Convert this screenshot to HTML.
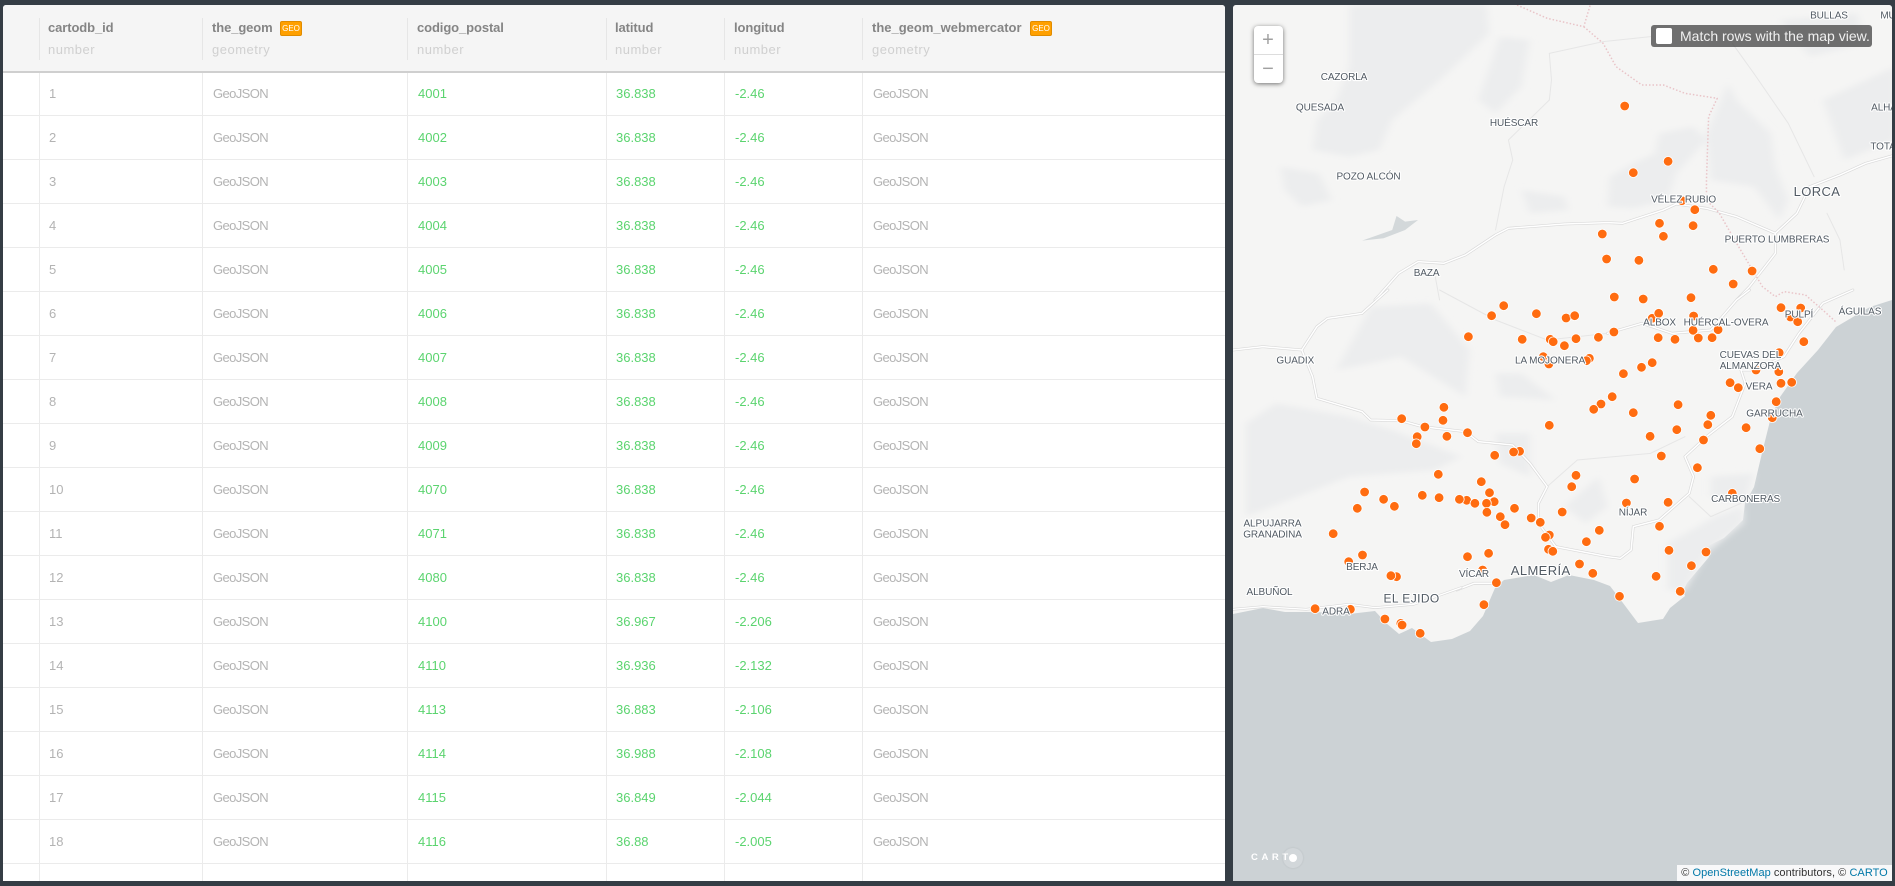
<!DOCTYPE html>
<html><head><meta charset="utf-8"><title>Table and map</title>
<style>
html,body{margin:0;padding:0;width:1895px;height:886px;overflow:hidden;background:#353d45;font-family:"Liberation Sans",sans-serif}
#t{position:absolute;left:3px;top:5px;width:1222px;height:876px;background:#fff;overflow:hidden;border-radius:3px 3px 0 0}
#h{position:absolute;left:0;top:0;width:1222px;height:66px;background:#f5f5f5;border-bottom:2px solid #cfcfcf}
.s{position:absolute;top:13px;height:42px;width:1px;background:#e6e6e6}
.v{position:absolute;top:68px;bottom:0;width:1px;background:#ebebeb}
.n{position:absolute;top:15px;font-size:13px;font-weight:bold;color:#858585;line-height:15px;white-space:nowrap;letter-spacing:-.1px}
.y{position:absolute;top:37px;font-size:13px;color:#d0d0d0;line-height:15px;white-space:nowrap;letter-spacing:.5px}
.g{position:absolute;top:16px;height:13px;width:20px;background:#ffa000;border:1px solid #e08c00;border-radius:2px;color:#fff;font-size:8px;line-height:14px;text-align:center;box-sizing:content-box}
.r{position:absolute;left:0;width:1222px;height:43px;border-bottom:1px solid #ebebeb;font-size:13px;line-height:44px;color:#b3b3b3}
.r span{position:absolute;top:0;white-space:nowrap}
.c1{left:46px}.c2{left:210px;letter-spacing:-.6px}.c3{left:415px;color:#5bd46f}.c4{left:613px;color:#5bd46f}.c5{left:732px;color:#5bd46f}.c6{left:870px;letter-spacing:-.6px}
#m{position:absolute;left:1233px;top:5px;width:659px;height:876px;overflow:hidden;background:#ccd2d5;border-radius:3px 3px 0 0}
#m svg{position:absolute;left:-1233px;top:-5px}
.l text{font-family:"Liberation Sans",sans-serif;font-size:10px;letter-spacing:-.1px;fill:#515a63;text-anchor:middle;stroke:#fff;stroke-width:2.2px;paint-order:stroke;stroke-linejoin:round}
.l text.b{font-size:13px;letter-spacing:.4px}
.d circle{fill:#ff6c10;stroke:#fff;stroke-width:.8;r:4.8px}
.rd{fill:none;stroke-linejoin:round;stroke-linecap:round}
.rd path,.rd polyline{vector-effect:non-scaling-stroke}
.hl path{fill:#ecedee}
#z{position:absolute;left:20.5px;top:20.5px;width:29px;height:57px;background:#fff;border-radius:4px;box-shadow:0 1px 5px rgba(0,0,0,.55);color:#a0a0a0;font-size:20px;text-align:center}
#z div{height:28px;line-height:29px}
#z div:first-child{border-bottom:1px solid #ddd}
#k{position:absolute;left:418px;top:20px;width:221px;height:22px;background:rgba(60,60,60,.72);border-radius:3px;color:#f0f0f0;font-size:14px;line-height:22px;white-space:nowrap}
#k i{position:absolute;left:5px;top:3px;width:16px;height:16px;background:#fff;border-radius:2px}
#k span{position:absolute;left:29px;top:0}
#a{position:absolute;right:0;bottom:0;height:16px;width:215px;background:rgba(255,255,255,.85);font-size:11px;line-height:16px;color:#333;text-align:center;white-space:nowrap;letter-spacing:.05px}
#a b{font-weight:normal;color:#0078a8}
#c{position:absolute;left:18px;top:843px;width:48px;height:20px;color:#fff;font-size:9.5px;font-weight:bold;letter-spacing:3.6px;line-height:20px;white-space:nowrap}
#o{position:absolute;left:50px;top:843px;width:20px;height:20px;border-radius:50%;background:rgba(255,255,255,.12);box-shadow:0 0 2px rgba(0,0,0,.1)}
#o:after{content:"";position:absolute;left:6px;top:6px;width:8px;height:8px;border-radius:50%;background:#fff}
</style></head><body>
<div id="t">
<div class="v" style="left:36px"></div><div class="v" style="left:199px"></div><div class="v" style="left:404px"></div><div class="v" style="left:603px"></div><div class="v" style="left:721px"></div><div class="v" style="left:859px"></div>
<div class="r" style="top:67px"><span class="c1">1</span><span class="c2">GeoJSON</span><span class="c3">4001</span><span class="c4">36.838</span><span class="c5">-2.46</span><span class="c6">GeoJSON</span></div>
<div class="r" style="top:111px"><span class="c1">2</span><span class="c2">GeoJSON</span><span class="c3">4002</span><span class="c4">36.838</span><span class="c5">-2.46</span><span class="c6">GeoJSON</span></div>
<div class="r" style="top:155px"><span class="c1">3</span><span class="c2">GeoJSON</span><span class="c3">4003</span><span class="c4">36.838</span><span class="c5">-2.46</span><span class="c6">GeoJSON</span></div>
<div class="r" style="top:199px"><span class="c1">4</span><span class="c2">GeoJSON</span><span class="c3">4004</span><span class="c4">36.838</span><span class="c5">-2.46</span><span class="c6">GeoJSON</span></div>
<div class="r" style="top:243px"><span class="c1">5</span><span class="c2">GeoJSON</span><span class="c3">4005</span><span class="c4">36.838</span><span class="c5">-2.46</span><span class="c6">GeoJSON</span></div>
<div class="r" style="top:287px"><span class="c1">6</span><span class="c2">GeoJSON</span><span class="c3">4006</span><span class="c4">36.838</span><span class="c5">-2.46</span><span class="c6">GeoJSON</span></div>
<div class="r" style="top:331px"><span class="c1">7</span><span class="c2">GeoJSON</span><span class="c3">4007</span><span class="c4">36.838</span><span class="c5">-2.46</span><span class="c6">GeoJSON</span></div>
<div class="r" style="top:375px"><span class="c1">8</span><span class="c2">GeoJSON</span><span class="c3">4008</span><span class="c4">36.838</span><span class="c5">-2.46</span><span class="c6">GeoJSON</span></div>
<div class="r" style="top:419px"><span class="c1">9</span><span class="c2">GeoJSON</span><span class="c3">4009</span><span class="c4">36.838</span><span class="c5">-2.46</span><span class="c6">GeoJSON</span></div>
<div class="r" style="top:463px"><span class="c1">10</span><span class="c2">GeoJSON</span><span class="c3">4070</span><span class="c4">36.838</span><span class="c5">-2.46</span><span class="c6">GeoJSON</span></div>
<div class="r" style="top:507px"><span class="c1">11</span><span class="c2">GeoJSON</span><span class="c3">4071</span><span class="c4">36.838</span><span class="c5">-2.46</span><span class="c6">GeoJSON</span></div>
<div class="r" style="top:551px"><span class="c1">12</span><span class="c2">GeoJSON</span><span class="c3">4080</span><span class="c4">36.838</span><span class="c5">-2.46</span><span class="c6">GeoJSON</span></div>
<div class="r" style="top:595px"><span class="c1">13</span><span class="c2">GeoJSON</span><span class="c3">4100</span><span class="c4">36.967</span><span class="c5">-2.206</span><span class="c6">GeoJSON</span></div>
<div class="r" style="top:639px"><span class="c1">14</span><span class="c2">GeoJSON</span><span class="c3">4110</span><span class="c4">36.936</span><span class="c5">-2.132</span><span class="c6">GeoJSON</span></div>
<div class="r" style="top:683px"><span class="c1">15</span><span class="c2">GeoJSON</span><span class="c3">4113</span><span class="c4">36.883</span><span class="c5">-2.106</span><span class="c6">GeoJSON</span></div>
<div class="r" style="top:727px"><span class="c1">16</span><span class="c2">GeoJSON</span><span class="c3">4114</span><span class="c4">36.988</span><span class="c5">-2.108</span><span class="c6">GeoJSON</span></div>
<div class="r" style="top:771px"><span class="c1">17</span><span class="c2">GeoJSON</span><span class="c3">4115</span><span class="c4">36.849</span><span class="c5">-2.044</span><span class="c6">GeoJSON</span></div>
<div class="r" style="top:815px"><span class="c1">18</span><span class="c2">GeoJSON</span><span class="c3">4116</span><span class="c4">36.88</span><span class="c5">-2.005</span><span class="c6">GeoJSON</span></div>
<div id="h">
<div class="s" style="left:36px"></div><div class="s" style="left:199px"></div><div class="s" style="left:404px"></div><div class="s" style="left:603px"></div><div class="s" style="left:721px"></div><div class="s" style="left:859px"></div>
<div class="n" style="left:45px">cartodb_id</div><div class="y" style="left:45px">number</div>
<div class="n" style="left:209px">the_geom</div><div class="g" style="left:277px">GEO</div><div class="y" style="left:209px">geometry</div>
<div class="n" style="left:414px">codigo_postal</div><div class="y" style="left:414px">number</div>
<div class="n" style="left:612px">latitud</div><div class="y" style="left:612px">number</div>
<div class="n" style="left:731px">longitud</div><div class="y" style="left:731px">number</div>
<div class="n" style="left:869px;letter-spacing:0">the_geom_webmercator</div><div class="g" style="left:1027px">GEO</div><div class="y" style="left:869px">geometry</div>
</div>
</div>
<div id="m">
<svg width="1895" height="886" viewBox="0 0 1895 886">
<defs><filter id="bl" x="-20%" y="-20%" width="140%" height="140%"><feGaussianBlur stdDeviation="9"/></filter></defs>
<path fill="#f5f5f4" d="M1233 0H1895V299L1870 307L1836 327L1818 350L1797 373L1780 397L1771 417L1762 453L1754 487L1745 503L1743 520L1724 538L1706 547L1709 557L1687 583L1683 591L1685 596L1670 608L1663 619L1638 623L1620 599L1610 586L1594 580L1569 575L1551 582L1534 575L1504 580L1495 588L1483 616L1470 631L1452 639L1431 642L1412 628L1399 634L1386 623L1375 611L1349 614L1315 612L1285 612L1263 608L1233 614Z"/>
<g class="hl" filter="url(#bl)" transform="translate(1220,0) scale(.4305,.3333)">
<path d="M300 15L620 15L625 100L520 230L400 360L370 450L300 470L215 450L225 360L270 300L300 200Z"/>
<path d="M900 620L905 530L960 490L1010 460L1020 400L1100 380L1130 420L1060 520L1040 600L960 625Z"/>
<path d="M1130 400L1180 250L1200 300L1280 400L1290 500L1320 600L1300 660L1240 560L1140 540Z"/>
<path d="M1400 300L1568 200L1568 420L1450 480Z"/>
<path d="M140 500L230 520L260 600L190 620L150 570Z"/>
<path d="M700 570L800 590L810 630L720 640Z"/>
<path d="M1300 60L1480 40L1500 130L1370 170Z"/>
<path d="M650 110L720 120L700 260L640 340L600 300Z"/>
</g>
<g class="hl" filter="url(#bl)" transform="translate(1220,290) scale(.4305,.3333)">
<path d="M270 240L350 50L490 40L580 180L570 320L420 200L350 220Z"/>
<path d="M60 400L130 340L300 380L400 420L560 500L500 540L300 560L180 620L60 680Z"/>
<path d="M800 650L880 560L900 650L850 700Z"/>
<path d="M1040 900L1040 760L1150 680L1215 650L1215 700L1130 790L1080 900Z"/>
<path d="M640 250L700 250L780 330L650 320Z"/>
<path d="M1140 560L1240 550L1220 640L1140 620Z"/>
<path d="M640 430L720 430L720 560L650 520Z"/>
</g>
<path fill="#d3d8da" transform="translate(1220,0) scale(.4305,.3333)" d="M330 722L400 690L410 648L430 665L460 660L430 690L380 715Z"/>
<g class="rd" stroke="#e6e6e6" transform="translate(1220,0) scale(.4305,.3333)" stroke-width="1">
<polyline points="765,300 770,240 765,160 890,125 1000,110"/>
<polyline points="640,690 660,560 680,480 670,420 765,300"/>
<polyline points="1190,130 1240,220 1320,370 1380,530"/>
<polyline points="1410,640 1440,720 1450,810"/>
<polyline points="510,900 500,830"/>
</g>
<g class="rd" transform="translate(1220,0) scale(.4305,.3333)">
<g stroke="#d9d9d9" stroke-width="2.8"><polyline points="360,900 415,820 460,785 520,790 570,765 640,705 670,685 800,672 900,668 935,670 1030,630 1060,612 1130,625 1200,650 1290,700 1290,760 1230,860 1200,900"/><polyline points="1290,700 1340,640 1370,560 1440,525 1500,490 1568,465"/></g>
<g stroke="#fff" stroke-width="1.5"><polyline points="360,900 415,820 460,785 520,790 570,765 640,705 670,685 800,672 900,668 935,670 1030,630 1060,612 1130,625 1200,650 1290,700 1290,760 1230,860 1200,900"/><polyline points="1290,700 1340,640 1370,560 1440,525 1500,490 1568,465"/></g>
</g>
<g class="rd" transform="translate(1220,290) scale(.4305,.3333)">
<g stroke="#e6e6e6" stroke-width="1"><polyline points="510,0 640,90 760,150 900,130"/><polyline points="760,590 830,510 1000,490 1080,440"/><polyline points="1090,620 1140,680 1210,640"/></g>
<g stroke="#d9d9d9" stroke-width="2.8"><polyline points="30,180 100,170 190,180 225,110 250,85 330,70 390,0"/><polyline points="190,180 215,260 225,325 330,365 350,390 420,392 470,410 570,425 600,455 680,465 720,520 760,590 740,640 740,700 780,770 900,800 930,805 955,780 960,710 1020,690 1090,610 1100,560 1080,500 1130,440 1190,380 1220,280 1210,240 1240,240 1310,200 1345,130 1400,40 1470,0"/><polyline points="900,130 980,100 1050,130 1140,120 1200,30 1230,0"/><polyline points="640,880 590,880 550,900"/></g>
<g stroke="#fff" stroke-width="1.5"><polyline points="30,180 100,170 190,180 225,110 250,85 330,70 390,0"/><polyline points="190,180 215,260 225,325 330,365 350,390 420,392 470,410 570,425 600,455 680,465 720,520 760,590 740,640 740,700 780,770 900,800 930,805 955,780 960,710 1020,690 1090,610 1100,560 1080,500 1130,440 1190,380 1220,280 1210,240 1240,240 1310,200 1345,130 1400,40 1470,0"/><polyline points="900,130 980,100 1050,130 1140,120 1200,30 1230,0"/><polyline points="640,880 590,880 550,900"/></g>
</g>
<g class="rd" transform="translate(1220,586) scale(.4305,.3333)">
<g stroke="#d9d9d9" stroke-width="2.6"><polyline points="30,70 100,62 200,70 300,55 360,65 450,55 560,5"/></g>
<g stroke="#fff" stroke-width="1.3"><polyline points="30,70 100,62 200,70 300,55 360,65 450,55 560,5"/></g>
</g>
<g class="rd" stroke="#e9c4c8" stroke-width="1.5" stroke-dasharray="1.5 2" style="stroke-linecap:butt" transform="translate(1220,0) scale(.4305,.3333)">
<polyline points="690,15 760,55 845,80 860,15"/>
<polyline points="845,80 890,130 920,200 980,255 1030,255 1080,280 1155,295 1135,350 1130,540 1130,600 1160,640 1200,730 1260,860 1290,890 1310,875 1360,885 1400,930 1430,965"/>
</g>
<g class="d">
<circle cx="1624.7" cy="106"/><circle cx="1668.1" cy="161.3"/><circle cx="1633.3" cy="172.7"/><circle cx="1681.9" cy="200.7"/><circle cx="1694.8" cy="209.7"/><circle cx="1659.5" cy="223.3"/><circle cx="1693.1" cy="225.7"/><circle cx="1602.3" cy="234"/><circle cx="1663.4" cy="236.3"/><circle cx="1606.6" cy="259"/><circle cx="1638.9" cy="260.3"/><circle cx="1713.3" cy="269.3"/><circle cx="1752.1" cy="271"/><circle cx="1733.2" cy="284"/>
<circle cx="1614.3" cy="297"/><circle cx="1643.2" cy="299"/><circle cx="1691" cy="297.7"/><circle cx="1503.7" cy="305.7"/><circle cx="1491.6" cy="315.7"/><circle cx="1536.4" cy="313.7"/><circle cx="1566.1" cy="318"/><circle cx="1574.7" cy="315.7"/><circle cx="1652.2" cy="318.3"/><circle cx="1658.7" cy="313.3"/><circle cx="1693.6" cy="316"/><circle cx="1781" cy="307.7"/><circle cx="1800.7" cy="308"/><circle cx="1790.4" cy="317"/><circle cx="1797.7" cy="321.7"/>
<circle cx="1468.4" cy="336.7"/><circle cx="1522.2" cy="339.3"/><circle cx="1550.2" cy="339.3"/><circle cx="1553.2" cy="341.7"/><circle cx="1564.4" cy="345.7"/><circle cx="1576" cy="338.7"/><circle cx="1598.4" cy="337.3"/><circle cx="1613.9" cy="332"/><circle cx="1658.2" cy="337.7"/><circle cx="1675" cy="339.3"/><circle cx="1693.1" cy="330.3"/><circle cx="1698.3" cy="338"/><circle cx="1712.1" cy="337.7"/><circle cx="1718.1" cy="329.7"/><circle cx="1803.8" cy="341.7"/><circle cx="1779.2" cy="352.7"/><circle cx="1543.3" cy="356.7"/><circle cx="1548.9" cy="364"/><circle cx="1589.4" cy="358.3"/><circle cx="1586.4" cy="360.7"/><circle cx="1623.4" cy="373.7"/><circle cx="1641.5" cy="367.3"/><circle cx="1652.2" cy="362.7"/><circle cx="1778.8" cy="371.7"/><circle cx="1756" cy="370"/><circle cx="1730.1" cy="382.7"/><circle cx="1738.3" cy="387.7"/><circle cx="1781" cy="383.3"/><circle cx="1791.7" cy="382.3"/><circle cx="1776.2" cy="401.7"/><circle cx="1612.2" cy="396.7"/><circle cx="1601" cy="404"/><circle cx="1593.7" cy="409.3"/><circle cx="1633.3" cy="412.7"/><circle cx="1678.1" cy="404.7"/><circle cx="1710.8" cy="415.3"/><circle cx="1707.8" cy="424.7"/><circle cx="1676.8" cy="429.7"/><circle cx="1650.1" cy="436.3"/><circle cx="1746.1" cy="427.7"/><circle cx="1703.5" cy="440"/><circle cx="1772.3" cy="417.7"/><circle cx="1759.8" cy="448.7"/><circle cx="1661.3" cy="456"/><circle cx="1697.4" cy="467.7"/><circle cx="1549.3" cy="425.3"/><circle cx="1443.9" cy="407.3"/><circle cx="1443" cy="420.3"/><circle cx="1401.7" cy="418.7"/><circle cx="1424.9" cy="427"/><circle cx="1417.2" cy="436.7"/><circle cx="1416.3" cy="443.7"/><circle cx="1446.9" cy="436.3"/><circle cx="1467.5" cy="432.7"/><circle cx="1494.7" cy="455.3"/><circle cx="1519.6" cy="451.3"/><circle cx="1513.6" cy="452"/><circle cx="1438.3" cy="474.3"/><circle cx="1481.3" cy="481.7"/><circle cx="1489.5" cy="492.7"/><circle cx="1576" cy="475.3"/><circle cx="1571.7" cy="486.7"/><circle cx="1634.6" cy="479"/><circle cx="1364.6" cy="492"/><circle cx="1383.6" cy="499.3"/><circle cx="1394.4" cy="506.3"/><circle cx="1357.3" cy="508.3"/><circle cx="1422.3" cy="495.3"/><circle cx="1439.1" cy="497.7"/><circle cx="1466.7" cy="500.3"/><circle cx="1459.4" cy="499.3"/><circle cx="1474.9" cy="503.3"/><circle cx="1494.2" cy="501.7"/><circle cx="1486.5" cy="503.3"/><circle cx="1486.9" cy="512.3"/><circle cx="1514.5" cy="508.3"/><circle cx="1500.3" cy="516.7"/><circle cx="1505" cy="524.7"/><circle cx="1531.2" cy="518"/><circle cx="1540.3" cy="522.3"/><circle cx="1562.2" cy="512"/><circle cx="1626.4" cy="503"/><circle cx="1668.1" cy="502.3"/><circle cx="1732.3" cy="493.3"/><circle cx="1599.3" cy="530.3"/><circle cx="1659.5" cy="526.3"/><circle cx="1549.3" cy="535"/><circle cx="1545.5" cy="537.3"/><circle cx="1586.4" cy="541.7"/><circle cx="1548.5" cy="549.3"/><circle cx="1552.8" cy="551.3"/><circle cx="1669" cy="550.3"/><circle cx="1706" cy="552"/><circle cx="1691.4" cy="565.7"/><circle cx="1333.2" cy="533.7"/><circle cx="1362.5" cy="555"/><circle cx="1348.7" cy="561.7"/><circle cx="1396.5" cy="576.7"/><circle cx="1390.9" cy="575.7"/><circle cx="1467.5" cy="556.7"/><circle cx="1488.6" cy="553.3"/><circle cx="1482.6" cy="570"/><circle cx="1496.4" cy="582.7"/><circle cx="1579.5" cy="564"/><circle cx="1592.8" cy="573.3"/><circle cx="1656.1" cy="576.3"/><circle cx="1680.2" cy="591.3"/><circle cx="1483.9" cy="604.7"/><circle cx="1315.1" cy="608.7"/><circle cx="1350.4" cy="609.3"/><circle cx="1384.9" cy="619"/><circle cx="1400.8" cy="623.3"/><circle cx="1402.1" cy="625"/><circle cx="1420.2" cy="633.3"/><circle cx="1619.5" cy="596.3"/>
</g>
<g class="l">
<text x="1829" y="18.5">BULLAS</text><text x="1888" y="18.5">MU</text><text x="1344" y="80">CAZORLA</text><text x="1320" y="110.5">QUESADA</text><text x="1514" y="126">HUÉSCAR</text><text x="1884" y="110.5">ALHA</text><text x="1368.5" y="179.5">POZO ALCÓN</text><text x="1883" y="149.5">TOTA</text><text x="1683.6" y="202.5">VÉLEZ RUBIO</text><text class="b" x="1817" y="196">LORCA</text><text x="1777" y="242.5">PUERTO LUMBRERAS</text><text x="1426.6" y="276">BAZA</text>
<text x="1799" y="317.5">PULPÍ</text><text x="1860" y="314.5">ÁGUILAS</text><text x="1659.6" y="325.5">ALBOX</text><text x="1726" y="325.5">HUÉRCAL-OVERA</text><text x="1750.4" y="358">CUEVAS DEL</text><text x="1750.4" y="369">ALMANZORA</text><text x="1295.3" y="363.5">GUADIX</text><text x="1550" y="363.5">LA MOJONERA</text><text x="1759" y="389.5">VERA</text><text x="1774.5" y="416.5">GARRUCHA</text><text x="1745.6" y="502">CARBONERAS</text><text x="1633" y="515.5">NÍJAR</text><text x="1272.5" y="526.5">ALPUJARRA</text><text x="1272.5" y="537.5">GRANADINA</text><text x="1362" y="570">BERJA</text><text x="1474" y="577">VÍCAR</text><text class="b" x="1540.7" y="575">ALMERÍA</text><text x="1269.5" y="595">ALBUÑOL</text><text class="b" style="font-size:12px" x="1411.6" y="602.5">EL EJIDO</text><text x="1336" y="614.5">ADRA</text>
</g>
</svg>
<div id="z"><div>+</div><div>&#8722;</div></div>
<div id="k"><i></i><span>Match rows with the map view.</span></div>
<div id="c">CART</div><div id="o"></div>
<div id="a">&copy; <b>OpenStreetMap</b> contributors, &copy; <b>CARTO</b></div>
</div>
</body></html>
